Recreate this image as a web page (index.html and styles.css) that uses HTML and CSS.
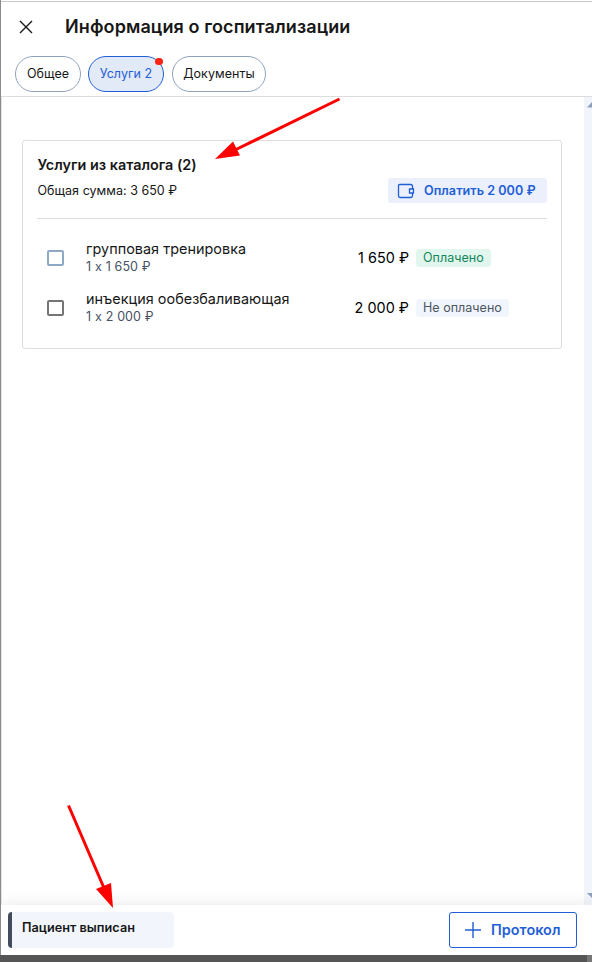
FILE: index.html
```html
<!DOCTYPE html>
<html lang="ru">
<head>
    <meta charset="utf-8">
    <title>Информация о госпитализации</title>
    <link rel="stylesheet" href="styles.css">
</head>
<body>
    <div class="panel">
        <header class="header">
            <div class="title-row">
                <button class="close" aria-label="Закрыть">
                    <svg width="14" height="14" viewBox="0 0 14 14"><path d="M1 1L13 13M13 1L1 13"/></svg>
                </button>
                <h1>Информация о госпитализации</h1>
            </div>
            <nav class="tabs">
                <button class="tab tab-general">Общее</button>
                <button class="tab tab-services active">Услуги 2<span class="dot"></span></button>
                <button class="tab tab-docs">Документы</button>
            </nav>
        </header>

        <main class="content">
            <div class="scroll-area">
                <section class="card">
                    <div class="card-header">
                        <div class="card-title">
                            <h2>Услуги из каталога (2)</h2>
                            <p class="total">Общая сумма: 3 650 ₽</p>
                        </div>
                        <button class="pay">
                            <svg width="18" height="16" viewBox="0 0 18 16"><path d="M15.5 6V3.2Q15.5 1.5 13.8 1.5H2.7Q1.5 1.5 1.5 2.7V12.8Q1.5 14.5 3 14.5H13.8Q15.5 14.5 15.5 12.8V10M12.5 6H16.5V10H12.5Z"/></svg>
                            <span>Оплатить 2 000 ₽</span>
                        </button>
                    </div>
                    <ul class="services">
                        <li class="service">
                            <span class="checkbox disabled"></span>
                            <div class="service-info">
                                <div class="service-name">групповая тренировка</div>
                                <div class="service-count">1 x 1 650 ₽</div>
                            </div>
                            <div class="price">1 650 ₽</div>
                            <span class="badge paid">Оплачено</span>
                        </li>
                        <li class="service">
                            <span class="checkbox"></span>
                            <div class="service-info">
                                <div class="service-name">инъекция ообезбаливающая</div>
                                <div class="service-count">1 x 2 000 ₽</div>
                            </div>
                            <div class="price">2 000 ₽</div>
                            <span class="badge unpaid">Не оплачено</span>
                        </li>
                    </ul>
                </section>
            </div>
            <div class="scrollbar">
                <svg width="8" height="6" viewBox="0 0 8 6"><path d="M3 5.5L8 0V5.5Z"/></svg>
                <svg width="8" height="6" viewBox="0 0 8 6"><path d="M3 0H8V5Z"/></svg>
            </div>
        </main>

        <footer class="footer">
            <div class="status">Пациент выписан</div>
            <button class="protocol">
                <svg width="16" height="16" viewBox="0 0 16 16"><path d="M8 0V16M0 8H16"/></svg>
                <span>Протокол</span>
            </button>
        </footer>
    </div>
    <div class="bottom-edge"></div>

    <!-- стрелки-подсказки поверх страницы -->
    <svg class="arrows" width="592" height="962" viewBox="0 0 592 962">
        <path class="line" d="M339.5 99L236 149.5M68.5 805.5L104 888"/>
        <path class="head" d="M215 159L233 141.5L240 155.5Z"/>
        <path class="head" d="M113 908L96 889L111 883Z"/>
    </svg>
</body>
</html>
```

FILE: styles.css
```css
* {
    box-sizing: border-box;
}
body {
    margin: 0;
    height: 962px;
    display: flex;
    flex-direction: column;
    overflow: hidden;
    font-family: Inter, "Liberation Sans", sans-serif;
    font-size: 12.5px;
    font-variant-ligatures: no-contextual;
    letter-spacing: 0.03px;
    color: #171717;
    background: #fff;
}
h1, h2, p, ul {
    margin: 0;
    padding: 0;
}
button {
    font-family: inherit;
    font-size: 12.5px;
    letter-spacing: inherit;
    margin: 0;
    padding: 0;
    background: none;
    border: none;
    white-space: nowrap;
}
svg {
    display: block;
    fill: none;
}
.panel {
    flex: 1;
    display: flex;
    flex-direction: column;
    border-left: 1px solid #8b8b8b;
}
.header {
    height: 96px;
    margin-top: 1px;
    border-top: 1px solid #cdc7c3;
    border-bottom: 1px solid #dcdcdc;
}
.title-row {
    display: flex;
    align-items: center;
    height: 50px;
    padding-left: 18px;
}
.close {
    width: 14px;
    height: 14px;
    margin-right: 32px;
}
.close svg {
    stroke: #171717;
    stroke-width: 1.4;
}
h1 {
    font-size: 18px;
    font-weight: 600;
    line-height: 24px;
    letter-spacing: 0.1px;
    white-space: nowrap;
}
.tabs {
    display: flex;
    margin-top: 4px;
    padding-left: 14px;
}
.tab {
    position: relative;
    height: 36px;
    padding-bottom: 1px;
    border: 1px solid #8fa3bb;
    border-radius: 18px;
    color: #171717;
}
.tab-general {
    width: 66px;
    margin-right: 7px;
}
.tab-services {
    width: 76px;
    margin-right: 8px;
}
.tab-docs {
    width: 94px;
}
.tab.active {
    color: #1f5fd6;
    background: #e3eaf7;
    border-color: #1f5fd6;
}
.dot {
    position: absolute;
    top: 1px;
    right: 0;
    width: 8px;
    height: 7px;
    border-radius: 4px;
    background: #fa2314;
}
.content {
    flex: 1;
    display: flex;
    border-left: 1px solid #e4e4e4;
}
.scroll-area {
    flex: 1;
    padding: 43px 22px 0 20px;
}
.scrollbar {
    width: 8px;
    padding: 5px 0 6px;
    display: flex;
    flex-direction: column;
    justify-content: space-between;
    background: #f1f5fb;
}
.scrollbar svg {
    fill: #8c9fbd;
}
.card {
    height: 209px;
    padding: 0 14px;
    border: 1px solid #dedede;
    border-radius: 3px;
}
.card-header {
    display: flex;
    justify-content: space-between;
    height: 78px;
    border-bottom: 1px solid #dcdcdc;
    padding-top: 14px;
}
.card-title {
    padding-left: 0.5px;
}
h2 {
    font-size: 14.4px;
    font-weight: 600;
    line-height: 20px;
    letter-spacing: 0;
}
.total {
    margin-top: 6px;
    line-height: 20px;
}
.pay {
    display: flex;
    align-items: center;
    width: 159px;
    height: 25px;
    margin-top: 23px;
    padding-left: 9px;
    border-radius: 3px;
    background: #ebf0fc;
    color: #1f5fd6;
    font-size: 12.6px;
    font-weight: 600;
}
.pay svg {
    margin-right: 9px;
    stroke: #1f5fd6;
    stroke-width: 1.3;
}
.services {
    list-style: none;
    padding-top: 14px;
}
.service {
    display: flex;
    align-items: center;
    height: 50px;
    padding-left: 10px;
}
.checkbox {
    width: 17px;
    height: 16px;
    margin-right: 22px;
    border: 2px solid #757575;
    border-radius: 2px;
}
.checkbox.disabled {
    border-color: #8fa8c5;
}
.service-info {
    width: 240px;
    padding-bottom: 1px;
}
.service-name {
    font-size: 14.4px;
    line-height: 18px;
}
.service-count {
    line-height: 17px;
    word-spacing: 0.3px;
    color: #465163;
}
.price {
    width: 83px;
    margin-right: 7px;
    padding-bottom: 1px;
    text-align: right;
    font-size: 14.4px;
    color: #000;
    white-space: nowrap;
}
.badge {
    height: 18px;
    padding: 0 7px;
    border-radius: 3px;
    line-height: 18px;
    white-space: nowrap;
}
.paid {
    width: 75px;
    color: #13875a;
    background: #e0f6ee;
}
.unpaid {
    width: 93px;
    color: #4c5564;
    background: #f1f5fc;
}
.footer {
    position: relative;
    display: flex;
    justify-content: space-between;
    height: 50px;
    padding: 7px 15px 7px 7px;
    background: #fff;
    box-shadow: 0 0 14px rgba(0, 0, 0, 0.1);
    clip-path: inset(-16px 0 0 0);
}
.status {
    width: 166px;
    height: 36px;
    padding-left: 10px;
    border-left: 4px solid #434c5a;
    border-radius: 4px;
    background: #f2f6fc;
    font-size: 12.7px;
    font-weight: 600;
    line-height: 31px;
}
.protocol {
    display: flex;
    align-items: center;
    width: 128px;
    height: 36px;
    padding-left: 15px;
    border: 1px solid #1f5fd6;
    border-radius: 3px;
    color: #1f5fd6;
    font-size: 14.4px;
    font-weight: 600;
}
.protocol svg {
    margin-right: 10px;
    stroke: #1f5fd6;
    stroke-width: 1.4;
}
.protocol span {
    padding-bottom: 1px;
}
.bottom-edge {
    height: 7px;
    background: linear-gradient(#555 0 0) left / 587px 100% no-repeat, #777;
}
.arrows {
    position: absolute;
    top: 0;
    left: 0;
}
.line {
    stroke: #f00;
    stroke-width: 3;
}
.head {
    fill: #f00;
}
```
